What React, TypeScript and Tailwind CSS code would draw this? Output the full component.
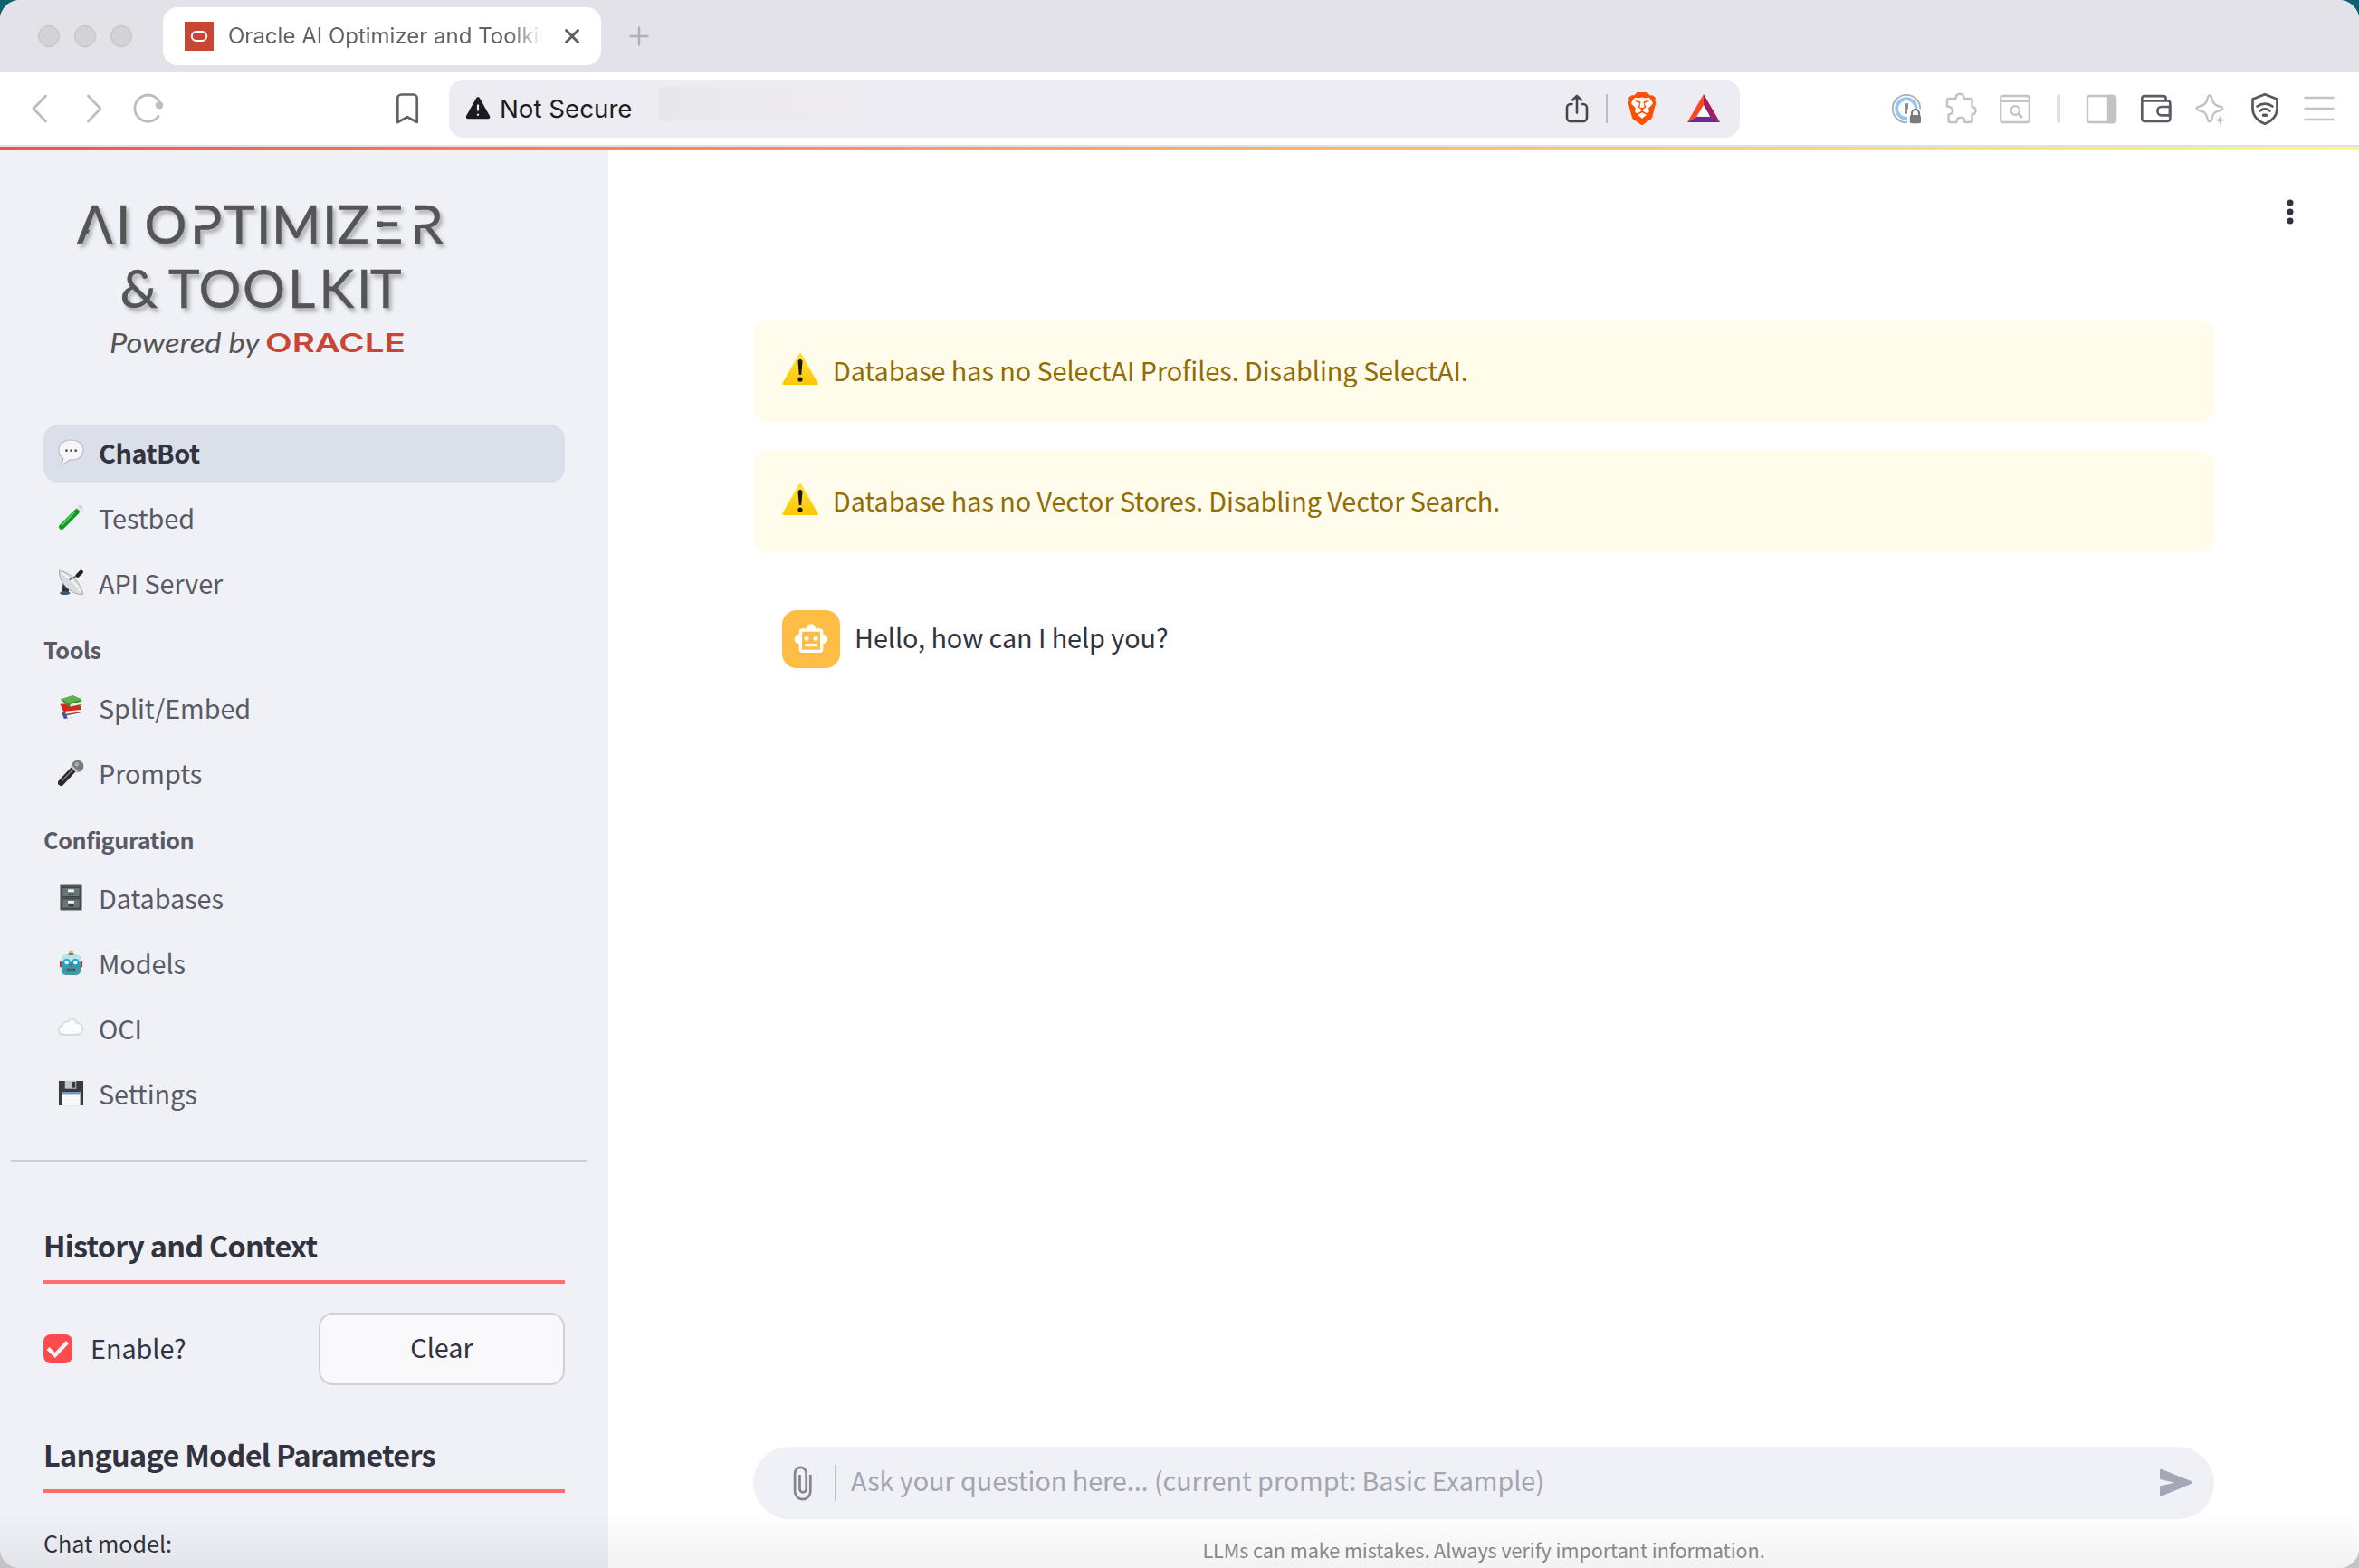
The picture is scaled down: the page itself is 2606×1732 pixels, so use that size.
import React from "react";
import { SiBrave } from "react-icons/si";

const SANS = "font-['Noto_Sans_CJK_SC','Noto_Sans',sans-serif]";

/* ---------- browser chrome ---------- */

function TabBar() {
  return (
    <div className="flex h-20 shrink-0 items-center bg-[#e3e2e8] pl-[42px]">
      <div className="flex gap-4">
        {[0, 1, 2].map((i) => (
          <span key={i} className="size-6 rounded-full border border-[#bfbebf] bg-[#d3d3d5]" />
        ))}
      </div>
      <div className="ml-[34px] flex h-16 w-[484px] items-center rounded-2xl bg-white pl-6">
        <svg className="size-8 shrink-0" viewBox="0 0 32 32">
          <rect width="32" height="32" fill="#c74634" />
          <rect x="7.8" y="11" width="16.4" height="10" rx="5" fill="none" stroke="#fff" strokeWidth="2" />
        </svg>
        <div className="ml-4 w-[354px] whitespace-nowrap font-['Inter',sans-serif] text-[24px] leading-8 text-[#5f6368] [mask-image:linear-gradient(to_right,black_312px,transparent_348px)]">
          Oracle AI Optimizer and Toolkit
        </div>
        <svg className="ml-[14px] size-6 shrink-0" viewBox="0 0 24 24" stroke="#5f6166" strokeWidth="3" strokeLinecap="round">
          <path d="M5.500 5.500l13 13M18.500 5.500l-13 13" />
        </svg>
      </div>
      <svg className="ml-[30px] size-6" viewBox="0 0 24 24" stroke="#b0b0b4" strokeWidth="2.400" strokeLinecap="round">
        <path d="M12 2.500v19M2.500 12h19" />
      </svg>
    </div>
  );
}

function AddressBar() {
  return (
    <div className="ml-8 flex h-16 w-[1426px] shrink-0 items-center rounded-2xl bg-[#edecf2] pl-[18px] pr-[21px]">
      <svg className="h-7 w-7" viewBox="0 0 28 28">
        <path d="M14 3.500L25 23H3z" fill="#1c1b1f" stroke="#1c1b1f" strokeWidth="4.500" strokeLinejoin="round" />
        <path d="M14 9.500v7M14 19.800v2" stroke="#edecf2" strokeWidth="2.200" />
      </svg>
      <span className="ml-[10px] w-[150px] whitespace-nowrap font-['Inter',sans-serif] text-[27.700px] leading-8 text-[#1c1b1f]">Not Secure</span>
      <div className="ml-[26px] mb-[10px] h-[38px] w-[218px] bg-linear-to-r from-[#e8e7eb] to-[#eeecef]" />
      <svg className="ml-auto h-9 w-7" viewBox="0 0 28 36" fill="none" stroke="#47474b" strokeWidth="2.600" strokeLinecap="round" strokeLinejoin="round">
        <path d="M8.500 13H7a4 4 0 0 0-4 4v11a4 4 0 0 0 4 4h14a4 4 0 0 0 4-4V17a4 4 0 0 0-4-4h-1.500M14 22.500V4M9.300 8.500L14 3.800l4.700 4.700" transform="translate(-1 0)" />
      </svg>
      <span className="ml-[17px] h-8 w-[2px] bg-[#bcbbc0]" />
      <span className="relative ml-[20px] mr-px flex h-9 w-9 items-center justify-center">
        <svg className="absolute inset-0 size-9" viewBox="0 0 36 36">
          <path d="M8 5h20l2 8-4 13-8 6-8-6-4-13z" fill="#fff" />
        </svg>
        <SiBrave className="relative size-9 text-[#ff5000]" />
      </span>
      <svg className="ml-[30px] h-8 w-[38px]" viewBox="0 0 38 32">
        <path d="M19 0L1 31l10-6 8-13z" fill="#ff4724" />
        <path d="M19 0l18 31-11-6-7-13z" fill="#9e1f63" />
        <path d="M1 31h36l-11-6.200H11.500z" fill="#662d91" />
        <path d="M19 12.500l7 12.300H12z" fill="#fff" />
      </svg>
    </div>
  );
}

function Toolbar() {
  return (
    <div className="flex h-20 shrink-0 items-center bg-white pl-8">
      <svg className="h-9 w-6" viewBox="0 0 24 36" fill="none" stroke="#bdbdc0" strokeWidth="2.800" strokeLinecap="round" strokeLinejoin="round">
        <path d="M18.500 4L5 18l13.500 14" />
      </svg>
      <svg className="ml-9 h-9 w-6" viewBox="0 0 24 36" fill="none" stroke="#bdbdc0" strokeWidth="2.800" strokeLinecap="round" strokeLinejoin="round">
        <path d="M5.500 4L19 18 5.500 32" />
      </svg>
      <svg className="ml-7 h-10 w-10" viewBox="0 0 40 40" fill="none" stroke="#bdbdc0" strokeWidth="2.800" strokeLinecap="round">
        <path d="M31.200 28.400A14.600 14.600 0 1 1 33 14" />
        <circle cx="32" cy="16.300" r="4.200" fill="#bdbdc0" stroke="none" />
      </svg>
      <svg className="ml-[252px] h-9 w-7" viewBox="0 0 28 36" fill="none" stroke="#5f6368" strokeWidth="2.700" strokeLinejoin="round">
        <path d="M3.300 6.500a4 4 0 0 1 4-4h13.400a4 4 0 0 1 4 4V33L14 27.200 3.300 33z" />
      </svg>
      <AddressBar />
      <svg className="ml-[166px] size-9" viewBox="0 0 36 36" fill="none">
        <circle cx="18" cy="18" r="15.200" stroke="#adadaf" strokeWidth="1.800" />
        <circle cx="18" cy="18" r="10.800" stroke="#94c6fb" strokeWidth="3.800" />
        <path d="M18 12.200v11.600" stroke="#8e8e90" strokeWidth="4" />
        <rect x="19" y="18.500" width="17" height="17.500" fill="#fff" />
        <path d="M24 26.500v-3.500a4 4 0 0 1 8 0v3.500" stroke="#7b7b7d" strokeWidth="2.200" />
        <rect x="21.800" y="25" width="12.200" height="9.300" rx="2" fill="#7b7b7d" />
      </svg>
      <svg className="ml-[24px] size-9" viewBox="0 0 36 36" fill="none" stroke="#c3c3c6" strokeWidth="2.500" strokeLinejoin="round">
        <path d="M4.500 7h8c0-3.500 1.500-5.300 4.500-5.300S21.500 3.500 21.500 7h7a2 2 0 0 1 2 2v7c2.700.3 4 1.900 4 4.200s-1.300 4-4 4.300V31a2 2 0 0 1-2 2h-6c0-3.600-1.600-5.200-4.500-5.200s-4.500 1.600-4.500 5.200h-7a2 2 0 0 1-2-2v-6.500c3-.4 4.500-2 4.500-4.500S6.500 15.900 3 15.500V8.500A1.500 1.500 0 0 1 4.500 7z" />
      </svg>
      <svg className="ml-[24px] size-9" viewBox="0 0 36 36" fill="none" stroke="#c3c3c6" strokeWidth="2.300">
        <rect x="2.200" y="4" width="31.600" height="29" rx="2.500" />
        <path d="M2 9.800h32" />
        <circle cx="18.300" cy="20" r="4.800" />
        <path d="M21.700 23.500l4.300 4.500" strokeWidth="2.800" />
      </svg>
      <span className="ml-[28px] h-8 w-1 rounded-full bg-[#e0dfe6]" />
      <svg className="ml-[27px] size-9" viewBox="0 0 36 36" fill="none" stroke="#c3c3c6" strokeWidth="2.300">
        <rect x="3" y="4" width="31" height="29" rx="2.500" />
        <path d="M26 4h5.500a2.500 2.500 0 0 1 2.500 2.500v24a2.500 2.500 0 0 1-2.500 2.500H26z" fill="#c3c3c6" />
      </svg>
      <svg className="ml-[25px] size-9" viewBox="0 0 36 36" fill="none" stroke="#5a5d63" strokeWidth="2.700" strokeLinejoin="round">
        <path d="M28.500 9.500V6.500a2.300 2.300 0 0 0-2.300-2.300H4.500A2.200 2.200 0 0 0 2.300 6.500v22.800a2.500 2.500 0 0 0 2.500 2.500h26a2.500 2.500 0 0 0 2.500-2.500V12a2.500 2.500 0 0 0-2.500-2.500H2.500" />
        <path d="M33 16h-9.500a4 4 0 0 0-4 4v1.300a4 4 0 0 0 4 4H33z" />
      </svg>
      <svg className="ml-[24px] size-9" viewBox="0 0 36 36" fill="none" stroke="#c3c3c6" strokeWidth="2.400" strokeLinejoin="round">
        <path d="M17 3.500c1.200 0 1.800.8 2.200 2.500 1.300 6 3.300 8.500 9.500 9.700 1.700.4 2.600 1 2.600 2.100s-.9 1.800-2.600 2.200c-6.200 1.200-8.200 3.700-9.500 9.700-.4 1.700-1 2.500-2.200 2.500s-1.800-.8-2.200-2.500c-1.300-6-3.300-8.500-9.500-9.700-1.700-.4-2.600-1.100-2.600-2.200s.9-1.700 2.600-2.100C11.500 14.500 13.500 12 14.800 6c.4-1.700 1-2.500 2.200-2.500z" />
        <path d="M28.500 25c1 4 1.500 4.500 5.500 5.500-4 1-4.500 1.500-5.500 5.500-1-4-1.500-4.500-5.500-5.500 4-1 4.500-1.500 5.500-5.500z" fill="#c3c3c6" stroke="none" />
      </svg>
      <svg className="ml-[24px] size-9" viewBox="0 0 36 36" fill="none" stroke="#55585e" strokeWidth="2.700" strokeLinejoin="round" strokeLinecap="round">
        <path d="M18 2.200L31.500 7.500v10c0 8.500-5.500 14-13.500 17.200C10 31.500 4.500 26 4.500 17.500v-10z" />
        <path d="M9.500 15.500c5-3.800 12-3.800 17 0M12.500 20.500c3.300-2.500 7.700-2.500 11 0" />
        <path d="M16.500 25.300h3" strokeWidth="3.500" />
      </svg>
      <svg className="ml-[24px] h-9 w-9" viewBox="0 0 36 36" stroke="#c3c3c6" strokeWidth="2.600">
        <path d="M1.500 6h33M1.500 18h33M1.500 30h33" />
      </svg>
    </div>
  );
}

/* ---------- sidebar ---------- */

function Logo() {
  return (
    <svg className="block h-[220px] w-[500px]" viewBox="40 190 500 220">
      <defs>
        <mask id="cuts" maskUnits="userSpaceOnUse" x="40" y="190" width="500" height="220">
          <rect x="40" y="190" width="500" height="220" fill="#fff" />
          <path d="M105.800 236L118.500 270H93z" />
          <path d="M413 232.300h10.500v12.200H413zM413 251h10.500v13H413zM210 232h12v17.500H210zM453 232h13v16.500H453z" />
        </mask>
        <filter id="soft" x="-10%" y="-20%" width="120%" height="150%">
          <feDropShadow dx="3" dy="4" stdDeviation="2" floodColor="#000" floodOpacity="0.28" />
        </filter>
      </defs>
      <g fill="#555555" stroke="#555555" strokeWidth="0.500" fontFamily="Lato, sans-serif" fontSize="58.600" filter="url(#soft)">
        <g mask="url(#cuts)">
          <text y="269" x="85 128 142 159.500 210 247 283 300 356 372.500 411.500 453">AI OPTIMIZER</text>
        </g>
        <text y="339.500" x="132.500 172 186 219.500 268 318 352.500 394 409">&amp; TOOLKIT</text>
      </g>
      <text x="121" y="389.500" fill="#555555" fontFamily="Lato, sans-serif" fontStyle="italic" fontSize="30" textLength="166" lengthAdjust="spacingAndGlyphs">Powered by</text>
      <text x="293" y="389" fill="#c74634" fontFamily="Inter, sans-serif" fontWeight="600" fontSize="28.500" textLength="155" lengthAdjust="spacingAndGlyphs">ORACLE</text>
    </svg>
  );
}

const emoji = {
  chat: (
    <>
      <path d="M15 1c8 0 14 4.800 14 11.300S23.500 24 15.500 24c-1 0-2 0-2.800-.2C10.500 26.500 7 28.600 3.500 28.800c2-2 2.600-4.300 2.300-6.900C2.700 19.900 1 16.700 1 12.300 1 5.800 7 1 15 1z" fill="#f6f6f6" stroke="#b9bcc2" strokeWidth="1.200" />
      <path d="M8.500 13h2.600M13.800 13h2.600M19.100 13h2.600" stroke="#444" strokeWidth="2.400" />
    </>
  ),
  tube: (
    <g strokeLinecap="round">
      <path d="M4 26L25 4.500" stroke="#c6ced3" strokeWidth="6.500" />
      <path d="M4.300 25.700L21.500 8.500" stroke="#0d9b22" strokeWidth="6" />
      <path d="M4.500 24L19 9" stroke="#5fd862" strokeWidth="1.600" />
      <path d="M22 2.500l5.500 5.500" stroke="#e3e9ec" strokeWidth="3" />
    </g>
  ),
  dish: (
    <>
      <path d="M6 15l7 6-1 6H4z" fill="#2b3342" />
      <ellipse cx="8" cy="27" rx="6" ry="2" fill="#3c5878" />
      <path d="M1.500 1.500C11 2 27 14 28.500 28.500 17 29.500 1 17 1.500 1.500z" fill="#d9dbde" stroke="#a4a7ab" strokeWidth="1" />
      <path d="M4 4c8 4 18 13 22 22" stroke="#f6f6f7" strokeWidth="2" fill="none" />
      <path d="M13 12L25 5" stroke="#5a5d62" strokeWidth="1.300" />
      <path d="M22.500 7L26.500 3" stroke="#222" strokeWidth="4.500" strokeLinecap="round" />
    </>
  ),
  books: (
    <>
      <path d="M4 20l16-2 7 5-16 4.500-4 .5z" fill="#3b55b5" />
      <path d="M10 24l16-3 1 3-16 3.500z" fill="#f2f2f2" />
      <path d="M2.500 11l17-1 6.500 3v8l-18 2.500z" fill="#d7261e" />
      <path d="M8.500 19.500l17.500-2v2.500l-17 2.500z" fill="#f4f1ee" />
      <path d="M3 6L17 1.500 27 6v6l-14 2.500z" fill="#3f8f35" />
      <path d="M3 5.500L17 1l10 4.500-14.500 4.500z" fill="#62b04f" />
      <path d="M14 11.500L27 8v3l-13 3z" fill="#efece6" />
    </>
  ),
  mic: (
    <>
      <path d="M3.500 26.500L17 12" stroke="#2b2b2d" strokeWidth="7" strokeLinecap="round" />
      <path d="M5 24L16.500 12" stroke="#77777b" strokeWidth="1.600" />
      <circle cx="22.500" cy="7.500" r="6.800" fill="#77797b" />
      <path d="M15 7l8 8" stroke="#c5c7c9" strokeWidth="2.200" />
      <circle cx="21.500" cy="5.500" r="2.500" fill="#a8aaac" />
    </>
  ),
  cabinet: (
    <>
      <rect x="2.500" y=".5" width="25" height="29" rx="1" fill="#50585b" />
      <rect x="5" y="3.500" width="20" height="10.500" fill="#6c7679" stroke="#3a4143" />
      <rect x="5" y="16.500" width="20" height="10.500" fill="#6c7679" stroke="#3a4143" />
      <path d="M11.500 5.500h7v3h-7zM11.500 18.500h7v3h-7z" fill="#f4f4f4" />
      <path d="M12 11h6M12 24h6" stroke="#2e3436" strokeWidth="2" />
    </>
  ),
  robot: (
    <>
      <circle cx="15" cy="3" r="2.500" fill="#f7b733" />
      <rect x="12" y="4.500" width="6" height="3" fill="#6a3e98" />
      <path d="M2 13h3v7H2zM25 13h3v7h-3z" fill="#d6322c" />
      <rect x="4" y="6" width="22" height="23" rx="5" fill="#3f9aa3" />
      <path d="M4 14V11a5 5 0 0 1 5-5h12a5 5 0 0 1 5 5v3z" fill="#b8e6e6" />
      <circle cx="10" cy="14.500" r="3.200" fill="#fff" stroke="#18a0d8" strokeWidth="1.800" />
      <circle cx="20" cy="14.500" r="3.200" fill="#fff" stroke="#18a0d8" strokeWidth="1.800" />
      <path d="M15 15l2 4h-4z" fill="#e0352b" />
      <path d="M10.500 21.500h9v3.500h-9z" fill="#1b4b55" />
      <path d="M11.500 23.300h7" stroke="#e8f4f4" strokeWidth="1.500" strokeDasharray="1.500 .8" />
    </>
  ),
  cloud: (
    <g transform="translate(0 -1.500)">
      <path d="M6.500 24.500a5.600 5.600 0 0 1-1.200-11c.5-3.500 3.700-5 6.200-4.200C13 6 19.500 5 21.500 11c4.500-.3 7 2.800 7 6.500 0 4-2.500 7-6.500 7z" fill="#fbfcfd" stroke="#ccd4dc" strokeWidth="1.300" />
      <path d="M3 22c3 1.800 21 1.800 24.500-.5-1 2.500-3 3.500-5.500 3.500H7c-1.800 0-3.500-1.500-4-3z" fill="#d3dce4" />
    </g>
  ),
  floppy: (
    <>
      <path d="M1 1h28v28H1z" fill="#3a3b3d" />
      <path d="M8 1h13v9H8z" fill="#c4c6c8" />
      <path d="M16 2h4v7h-4z" fill="#3a3b3d" />
      <path d="M4.500 13.500h21V29h-21z" fill="#f8f8f8" />
      <path d="M4.500 13.500h21v2.500h-21z" fill="#5b9bd8" />
    </>
  ),
};

function NavItem({ icon, label, active }: { icon: keyof typeof emoji; label: string; active?: boolean }) {
  return (
    <div className={active ? "flex h-16 items-center rounded-2xl bg-[#dadfea] pl-4" : "flex h-16 items-center pl-4"}>
      <svg className="mb-[3px] h-[29px] w-[29px] shrink-0" viewBox="0 0 30 30" fill="none">
        {emoji[icon]}
      </svg>
      <span
        className={
          active
            ? "relative -top-px ml-4 text-[28.800px] leading-10 font-bold tracking-[-0.450px] text-[#31333f]"
            : "relative -top-px ml-4 text-[28.800px] leading-10 tracking-[-0.060px] text-[#585a66]"
        }
      >
        {label}
      </span>
    </div>
  );
}

function NavHeading({ children }: { children: React.ReactNode }) {
  return (
    <div className="flex h-[46px] items-center pb-[6px] text-[25.200px] leading-[38px] font-semibold tracking-[-0.380px] text-[#585a66]">
      {children}
    </div>
  );
}

function SectionHeading({ children }: { children: React.ReactNode }) {
  return (
    <div className="border-b-4 border-[#ff6c6c]">
      <h3 className="h-[60px] whitespace-nowrap pt-px text-[32.400px] leading-[40px] font-semibold tracking-[-0.720px] text-[#31333f]">
        {children}
      </h3>
    </div>
  );
}

function Sidebar() {
  return (
    <aside className="flex w-[672px] shrink-0 flex-col overflow-hidden bg-[#f0f1f7]">
      <div className="ml-10 mt-6 h-[220px]">
        <Logo />
      </div>
      <nav className="mt-[59px] flex flex-col px-12">
        <div className="flex flex-col gap-2">
          <NavItem icon="chat" label="ChatBot" active />
          <NavItem icon="tube" label="Testbed" />
          <NavItem icon="dish" label="API Server" />
        </div>
        <div className="mt-[20px]">
          <NavHeading>Tools</NavHeading>
        </div>
        <div className="mt-[8px] flex flex-col gap-2">
          <NavItem icon="books" label="Split/Embed" />
          <NavItem icon="mic" label="Prompts" />
        </div>
        <div className="mt-[20px]">
          <NavHeading>Configuration</NavHeading>
        </div>
        <div className="mt-[8px] flex flex-col gap-2">
          <NavItem icon="cabinet" label="Databases" />
          <NavItem icon="robot" label="Models" />
          <NavItem icon="cloud" label="OCI" />
          <NavItem icon="floppy" label="Settings" />
        </div>
      </nav>
      <div className="ml-3 mr-6 mt-10 h-[2px] shrink-0 bg-[#caccd3]" />
      <div className="mt-[71px] flex flex-col px-12">
        <SectionHeading>History and Context</SectionHeading>
        <div className="mt-8 flex h-20 items-center">
          <svg className="size-8" viewBox="0 0 32 32">
            <rect width="32" height="32" rx="8" fill="#ff4b4b" />
            <path d="M5 15.500l7.800 7.500L26.500 8.500" fill="none" stroke="#f4f4f8" strokeWidth="4.400" />
          </svg>
          <span className="relative -top-px ml-5 text-[28.800px] leading-10 tracking-[-0.060px] text-[#31333f]">Enable?</span>
          <button className="ml-auto h-20 w-[272px] rounded-2xl border-2 border-[#d0d1d7] bg-[#f9f9fb] pb-1 text-[28.800px] leading-10 text-[#31333f]">
            Clear
          </button>
        </div>
        <div className="mt-[55px]">
          <SectionHeading>Language Model Parameters</SectionHeading>
        </div>
        <div className="mt-[36px] text-[25.200px] leading-[38px] tracking-[-0.060px] text-[#31333f]">Chat model:</div>
      </div>
    </aside>
  );
}

/* ---------- main area ---------- */

function Alert({ children }: { children: React.ReactNode }) {
  return (
    <div className="flex h-28 items-center rounded-2xl bg-[#fffceb] pl-8 text-[28.800px] leading-10 tracking-[-0.065px] text-[#926c05]">
      <svg className="mb-[5px] h-[37px] w-10" viewBox="0 0 40 37">
        <defs>
          <linearGradient id="amber" x1="0" y1="0" x2="0" y2="1">
            <stop offset="0" stopColor="#ffe03a" />
            <stop offset="1" stopColor="#ffc608" />
          </linearGradient>
        </defs>
        <path d="M20 2.500L38 34.500H2z" fill="url(#amber)" stroke="url(#amber)" strokeWidth="3" strokeLinejoin="round" />
        <path d="M17.500 10.500a2.500 2.500 0 0 1 5 0L21.200 25h-2.400z" fill="#161616" />
        <circle cx="20" cy="30" r="2.600" fill="#161616" />
      </svg>
      <span className="relative -top-px ml-4">{children}</span>
    </div>
  );
}

function Main() {
  return (
    <main className="flex grow flex-col bg-white">
      <div className="flex justify-end pr-[72px] pt-[54px]">
        <svg className="h-7 w-2" viewBox="0 0 8 28" fill="#31333f">
          <circle cx="4" cy="4" r="3.500" />
          <circle cx="4" cy="14" r="3.500" />
          <circle cx="4" cy="24" r="3.500" />
        </svg>
      </div>
      <div className="ml-40 mr-40 mt-[106px] flex flex-col gap-8">
        <Alert>Database has no SelectAI Profiles. Disabling SelectAI.</Alert>
        <Alert>Database has no Vector Stores. Disabling Vector Search.</Alert>
        <div className="mt-8 flex h-16 items-center pl-8">
          <div className="flex size-16 items-center justify-center rounded-2xl bg-[#ffbd45]">
            <svg className="size-10" viewBox="0 0 24 24" fill="#fff">
              <path d="M20 9V7c0-1.100-.9-2-2-2h-3c0-1.660-1.340-3-3-3S9 3.340 9 5H6c-1.100 0-2 .9-2 2v2c-1.660 0-3 1.340-3 3s1.340 3 3 3v4c0 1.100.9 2 2 2h12c1.100 0 2-.9 2-2v-4c1.660 0 3-1.340 3-3s-1.340-3-3-3zm-2 10H6V7h12v12zm-9-6c-.83 0-1.500-.67-1.500-1.500S8.170 10 9 10s1.500.67 1.500 1.500S9.830 13 9 13zm7.500-1.500c0 .83-.67 1.500-1.500 1.500s-1.500-.67-1.500-1.500.67-1.500 1.500-1.500 1.500.67 1.500 1.500zM8 15h8v2H8v-2z" />
            </svg>
          </div>
          <span className="relative -top-[2px] ml-4 text-[28.800px] leading-10 tracking-[-0.060px] text-[#31333f]">Hello, how can I help you?</span>
        </div>
      </div>
      <div className="mt-auto flex flex-col items-center">
        <div className="flex h-20 w-[1614px] items-center rounded-full bg-[#f0f1f7] pl-[43px] pr-[24px]">
          <svg className="h-10 w-6" viewBox="0 0 24 40" fill="none" stroke="#82848f" strokeWidth="2.700">
            <path d="M21.300 11v18.500a8.600 8.600 0 0 1-17.200 0V9.200a6.300 6.300 0 0 1 12.600 0v17.500a3.600 3.600 0 0 1-7.200 0V11" transform="translate(-1 0)" />
          </svg>
          <span className="ml-[23px] h-10 w-[2px] bg-[#bfc0c8]" />
          <span className="relative -top-[3px] ml-4 text-[28.800px] leading-10 tracking-[-0.065px] text-[#a3a5b0]">
            Ask your question here... (current prompt: Basic Example)
          </span>
          <svg className="ml-auto h-8 w-9" viewBox="0 0 36 32" fill="#a3a8b8">
            <path d="M0 2.200C0 .8 1 .4 2.200.9L34.500 14c1.800.8 1.800 2.200 0 3L2.200 30.600C1 31.100 0 30.600 0 29.300V19.500l16-3.800L0 12z" />
          </svg>
        </div>
        <div className="mt-[14px] h-10 text-[21.600px] leading-10 tracking-[-0.055px] text-[#8c8c90]">
          LLMs can make mistakes. Always verify important information.
        </div>
      </div>
    </main>
  );
}

export default function App() {
  return (
    <div className="h-[1732px] w-[2606px] overflow-hidden bg-[linear-gradient(to_bottom,#0f6070_0,#0f6070_60px,#c4c4c6_61px)]">
      <div className={`relative flex h-full flex-col overflow-hidden rounded-[22px] bg-white ${SANS}`}>
        <TabBar />
        <Toolbar />
        <div className="h-[2px] shrink-0 bg-[#e0e0e7]" />
        <div className="h-1 shrink-0 bg-linear-to-r from-[#ff4b4b] to-[#fffd80]" />
        <div className="flex min-h-0 grow">
          <Sidebar />
          <Main />
        </div>
        <div className="pointer-events-none absolute inset-x-0 bottom-0 h-16 bg-linear-to-t from-black/5 to-transparent" />
      </div>
    </div>
  );
}
